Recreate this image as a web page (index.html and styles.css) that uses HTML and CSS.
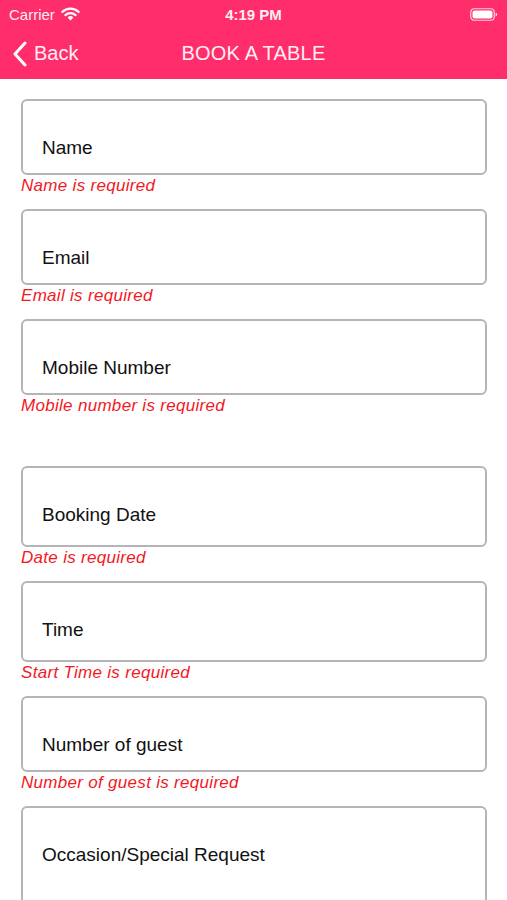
FILE: index.html
```html
<!DOCTYPE html>
<html>
<head>
  <title>Book a Table</title>
  <link rel="stylesheet" href="styles.css">
</head>
<body>
  <div class="header">
    <div class="status-bar">
      <div class="carrier">
        Carrier
        <svg class="wifi" width="19" height="14" viewBox="0 0 19 14">
          <path d="M9.5 13.5 L6.6 10.4 A4.2 4.2 0 0 1 12.4 10.4 Z" fill="#fff"/>
          <path d="M4.4 8.1 A7.4 7.4 0 0 1 14.6 8.1" stroke="#fff" stroke-width="2.2" fill="none" stroke-linecap="round"/>
          <path d="M1.4 4.9 A11.6 11.6 0 0 1 17.6 4.9" stroke="#fff" stroke-width="2.2" fill="none" stroke-linecap="round"/>
        </svg>
      </div>
      <div class="clock">4:19 PM</div>
      <div class="battery">
        <svg width="28" height="13" viewBox="0 0 28 13">
          <rect x="0.75" y="0.75" width="23.5" height="11.5" rx="3.5" stroke="#ffd0de" stroke-width="1.2" fill="none"/>
          <rect x="2.5" y="2.5" width="20" height="8" rx="2" fill="#fff"/>
          <path d="M25.6 4.4 Q27.2 4.6 27.2 6.5 Q27.2 8.4 25.6 8.6 Z" fill="#ffd0de"/>
        </svg>
      </div>
    </div>
    <div class="nav-bar">
      <a class="back" href="#">
        <svg width="16" height="26" viewBox="0 0 16 26">
          <path d="M13 2 L3 13 L13 24" stroke="#fff" stroke-width="3" fill="none" stroke-linecap="round" stroke-linejoin="round"/>
        </svg>
        Back
      </a>
      <div class="title">BOOK A TABLE</div>
      <div></div>
    </div>
  </div>

  <form class="booking-form">
    <div class="field">Name</div>
    <div class="error">Name is required</div>

    <div class="field">Email</div>
    <div class="error">Email is required</div>

    <div class="field">Mobile Number</div>
    <div class="error">Mobile number is required</div>

    <div class="spacer"></div>

    <div class="field tall">Booking Date</div>
    <div class="error">Date is required</div>

    <div class="field tall">Time</div>
    <div class="error">Start Time is required</div>

    <div class="field">Number of guest</div>
    <div class="error">Number of guest is required</div>

    <div class="field area">Occasion/Special Request</div>
  </form>
</body>
</html>
```

FILE: styles.css
```css
body {
  font-family: "Liberation Sans", Arial, sans-serif;
  margin: 0;
  background-color: #ffffff;
}

.header {
  background-color: #ff2d6b;
  color: #ffeef4;
}

.status-bar {
  height: 28px;
  display: grid;
  grid-template-columns: 1fr auto 1fr;
  align-items: center;
  padding: 0 9px;
  font-size: 15px;
}

.carrier {
  display: flex;
  align-items: center;
  gap: 6px;
}

.clock {
  font-weight: bold;
}

.battery {
  display: flex;
  justify-content: flex-end;
}

.nav-bar {
  height: 51px;
  display: grid;
  grid-template-columns: 1fr auto 1fr;
  align-items: center;
  padding: 0 12px;
}

.back {
  display: flex;
  align-items: center;
  gap: 6px;
  color: #ffeef4;
  text-decoration: none;
  font-size: 20px;
}

.title {
  font-size: 20px;
  letter-spacing: 0.2px;
}

.booking-form {
  padding: 20px 20px 0 21px;
}

.field {
  box-sizing: border-box;
  height: 76px;
  border: 2px solid #b5b5b5;
  border-radius: 6px;
  padding: 36px 0 0 19px;
  font-size: 19px;
  line-height: 22px;
  color: #111111;
}

.field.tall {
  height: 81px;
}

.field.area {
  height: 130px;
}

.error {
  height: 34px;
  line-height: 22px;
  font-size: 17px;
  font-style: italic;
  letter-spacing: 0.3px;
  color: #f2191f;
}

.spacer {
  height: 37px;
}
```
